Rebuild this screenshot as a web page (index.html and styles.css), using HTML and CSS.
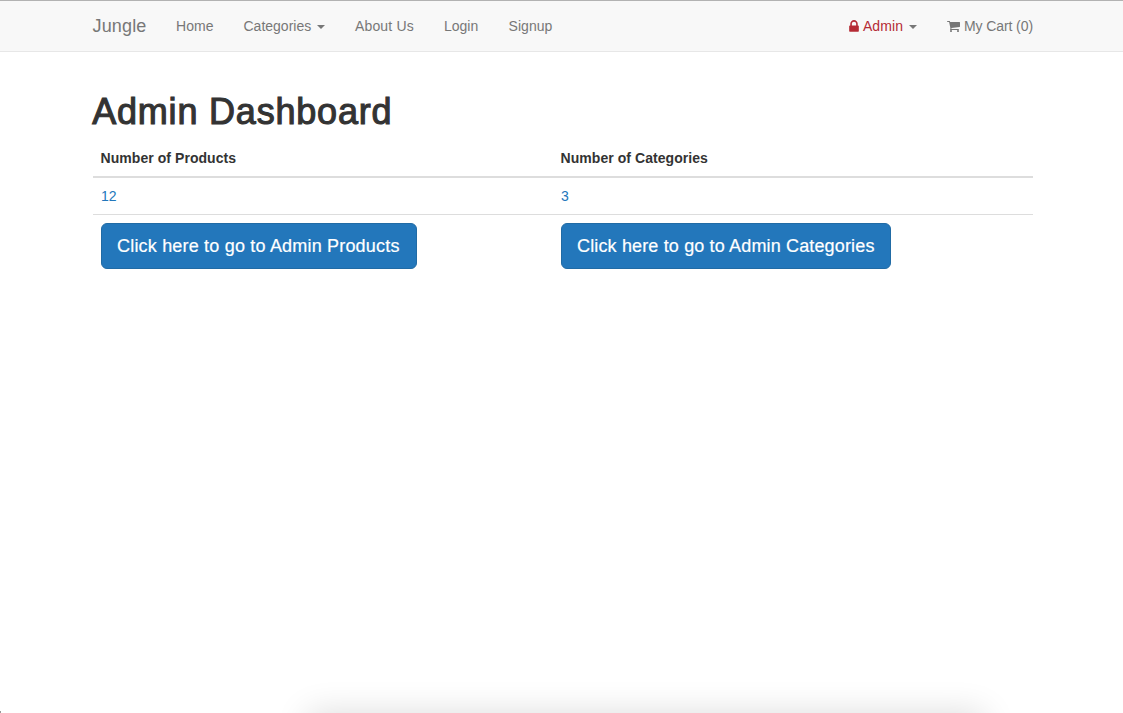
FILE: index.html
```
<!DOCTYPE html>
<html lang="en">
<head>
<meta charset="utf-8">
<title>Jungle</title>
<link rel="stylesheet" href="styles.css">
</head>
<body>
<nav class="navbar">
  <div class="container nav-row">
    <a class="brand">Jungle</a>
    <a class="nav-link home">Home</a>
    <a class="nav-link categories">Categories <span class="caret"></span></a>
    <a class="nav-link about">About Us</a>
    <a class="nav-link login">Login</a>
    <a class="nav-link signup">Signup</a>
    <div class="nav-right">
      <a class="nav-link admin"><svg class="lock" width="9" height="14" viewBox="0 0 1152 1792"><path fill="currentColor" d="M320 768h512V576q0-106-75-181t-181-75-181 75-75 181v192zm832 96v576q0 40-28 68t-68 28H96q-40 0-68-28t-28-68V864q0-40 28-68t68-28h32V576q0-184 132-316t316-132 316 132 132 316v192h32q40 0 68 28t28 68z"/></svg><span class="label">Admin</span> <span class="caret"></span></a>
      <a class="nav-link cart"><svg class="basket" width="13" height="14" viewBox="0 0 1664 1792"><path fill="currentColor" d="M640 1536q0 52-38 90t-90 38-90-38-38-90 38-90 90-38 90 38 38 90zm896 0q0 52-38 90t-90 38-90-38-38-90 38-90 90-38 90 38 38 90zm128-1088v512q0 24-16.500 42.500T1607 1024L563 1146q13 60 13 70 0 16-24 64h920q26 0 45 19t19 45-19 45-45 19H448q-26 0-45-19t-19-45q0-11 8-31.500t16-36 21.500-40 15.500-29.500L268 384H64q-26 0-45-19T0 320t19-45 45-19h256q16 0 28.500 6.500T368 278t13 24.500 8 26 5.500 29.500 4.500 26h1201q26 0 45 19t19 45z"/></svg><span class="label">My Cart (0)</span></a>
    </div>
  </div>
</nav>
<main class="container">
  <h1>Admin Dashboard</h1>
  <table class="stats">
    <thead><tr><th class="products">Number of Products</th><th class="category-count">Number of Categories</th></tr></thead>
    <tbody>
      <tr><td><a class="count">12</a></td><td><a class="count">3</a></td></tr>
      <tr class="actions"><td><a class="button to-products">Click here to go to Admin Products</a></td><td><a class="button to-categories">Click here to go to Admin Categories</a></td></tr>
    </tbody>
  </table>
</main>
<div class="bottom-shadow"></div>
<div class="corner"></div>
</body>
</html>
```
FILE: styles.css
```
* { box-sizing: border-box; }
html, body { height: 100%; overflow: hidden; }
body { margin: 0; background: #fff; color: #333; font: 14px/20px "Liberation Sans", Arial, sans-serif; }
.container { width: 940px; margin: 0 0 0 93px; }
.navbar { height: 52px; background: #f8f8f8; border-top: 1px solid #b2b2b2; border-bottom: 1px solid #e7e7e7; color: #777; }
.nav-row { display: flex; height: 50px; align-items: center; white-space: nowrap; }
.brand { width: 83px; font-size: 18px; letter-spacing: 0.15px; text-indent: -0.5px; }
.home { width: 67.5px; letter-spacing: 0.1px; }
.categories { width: 111.5px; }
.about { width: 89px; letter-spacing: 0.15px; }
.login { width: 64.5px; }
.signup { letter-spacing: 0.05px; }
.caret { display: inline-block; width: 0; height: 0; margin-left: 2px; vertical-align: middle; border-top: 4px solid #777; border-left: 4px solid transparent; border-right: 4px solid transparent; }
.nav-right { display: flex; margin-left: auto; }
.admin { width: 98px; }
.admin .label, .lock { color: #b52b35; }
.admin .label { letter-spacing: 0.15px; }
.lock { width: 10px; height: 15px; margin-right: 4px; vertical-align: -3px; }
.basket { margin-right: 4px; vertical-align: -2px; }
.cart .label { letter-spacing: -0.08px; }
h1 { margin: 40px 0 9px; font-size: 36px; line-height: 39px; font-weight: 400; letter-spacing: 0.8px; text-indent: -0.8px; -webkit-text-stroke: 1.1px #333; }
.stats { width: 940px; border-collapse: collapse; table-layout: fixed; }
.products { width: 460px; }
.stats th { padding: 8px 8px 8px 7.5px; text-align: left; border-bottom: 2px solid #ddd; letter-spacing: 0.06px; }
.stats td { padding: 8px; border-top: 1px solid #ddd; vertical-align: top; }
.count { color: #2377bb; }
.button { display: inline-block; height: 46px; padding: 10px 15px; border: 1px solid #216ba5; border-radius: 6px; background: #2377bb; color: #fff; font-size: 18px; line-height: 24px; white-space: nowrap; -webkit-text-stroke: 0.2px #fff; }
.to-products { width: 316px; letter-spacing: 0.19px; }
.to-categories { width: 330px; letter-spacing: 0.15px; }
.bottom-shadow { position: absolute; left: 258px; bottom: 0; width: 776px; height: 50px; overflow: hidden; }
.bottom-shadow::after { content: ""; display: block; width: 676px; height: 60px; margin: 50px auto 0; box-shadow: 0 0 34px rgba(0, 0, 0, 0.14); }
.corner { position: absolute; left: 0; bottom: 0; width: 1px; height: 2px; background: #999; }
```
